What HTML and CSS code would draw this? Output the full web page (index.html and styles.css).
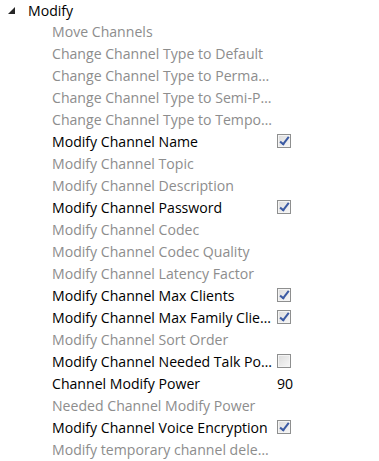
FILE: index.html
```html
<!DOCTYPE html>
<html lang="en">
<head>
  <meta charset="UTF-8" />
  <title>Permissions - Modify</title>
  <link rel="stylesheet" href="styles.css">
</head>
<body>
  <div class="tree">
    <div class="group">
      <span class="expander"></span>
      <span class="group-name">Modify</span>
    </div>
    <div class="perms">
      <div class="perm off"><span class="name">Move Channels</span><span class="value"></span></div>
      <div class="perm off"><span class="name">Change Channel Type to Default</span><span class="value"></span></div>
      <div class="perm off"><span class="name">Change Channel Type to Permanent</span><span class="value"></span></div>
      <div class="perm off"><span class="name">Change Channel Type to Semi-Permanent</span><span class="value"></span></div>
      <div class="perm off"><span class="name">Change Channel Type to Temporary</span><span class="value"></span></div>
      <div class="perm"><span class="name">Modify Channel Name</span><span class="value"><span class="check checked"></span></span></div>
      <div class="perm off"><span class="name">Modify Channel Topic</span><span class="value"></span></div>
      <div class="perm off"><span class="name">Modify Channel Description</span><span class="value"></span></div>
      <div class="perm"><span class="name">Modify Channel Password</span><span class="value"><span class="check checked"></span></span></div>
      <div class="perm off"><span class="name">Modify Channel Codec</span><span class="value"></span></div>
      <div class="perm off"><span class="name">Modify Channel Codec Quality</span><span class="value"></span></div>
      <div class="perm off"><span class="name">Modify Channel Latency Factor</span><span class="value"></span></div>
      <div class="perm"><span class="name">Modify Channel Max Clients</span><span class="value"><span class="check checked"></span></span></div>
      <div class="perm"><span class="name">Modify Channel Max Family Clients</span><span class="value"><span class="check checked"></span></span></div>
      <div class="perm off"><span class="name">Modify Channel Sort Order</span><span class="value"></span></div>
      <div class="perm"><span class="name">Modify Channel Needed Talk Power</span><span class="value"><span class="check"></span></span></div>
      <div class="perm"><span class="name">Channel Modify Power</span><span class="value">90</span></div>
      <div class="perm off"><span class="name">Needed Channel Modify Power</span><span class="value"></span></div>
      <div class="perm"><span class="name">Modify Channel Voice Encryption</span><span class="value"><span class="check checked"></span></span></div>
      <div class="perm off"><span class="name">Modify temporary channel delete delay</span><span class="value"></span></div>
    </div>
  </div>
</body>
</html>
```

FILE: styles.css
```css
body {
  margin: 0;
  background: #ffffff;
  font-family: 'Open Sans', 'Noto Sans', sans-serif;
  font-size: 14.1px;
  color: #000000;
}

.group {
  display: flex;
  align-items: center;
  height: 20px;
  padding-left: 8px;
}

.expander {
  width: 0;
  height: 0;
  border-left: 7px solid transparent;
  border-bottom: 7px solid #262626;
  margin-right: 13px;
}

.group-name {
  color: #000000;
}

.perms {
  padding-left: 52px;
}

.perm {
  display: grid;
  grid-template-columns: 225px 1fr;
  align-items: center;
  height: 22px;
}

.perm.off .name {
  color: #8d8d8d;
}

.name {
  white-space: nowrap;
  overflow: hidden;
  text-overflow: ellipsis;
  padding-right: 4px;
}

.value {
  display: flex;
  align-items: center;
}

.check {
  box-sizing: border-box;
  width: 14px;
  height: 14px;
  border: 1px solid #8e8f8f;
  background: linear-gradient(135deg, #dcdcdc, #f7f7f7);
  box-shadow: inset 0 0 0 1px #f4f4f4;
  position: relative;
}

.check.checked::after {
  content: "";
  position: absolute;
  left: 4px;
  top: 0;
  width: 3px;
  height: 8px;
  border-right: 2px solid #3b5aa3;
  border-bottom: 2px solid #3b5aa3;
  transform: rotate(38deg);
}
```
